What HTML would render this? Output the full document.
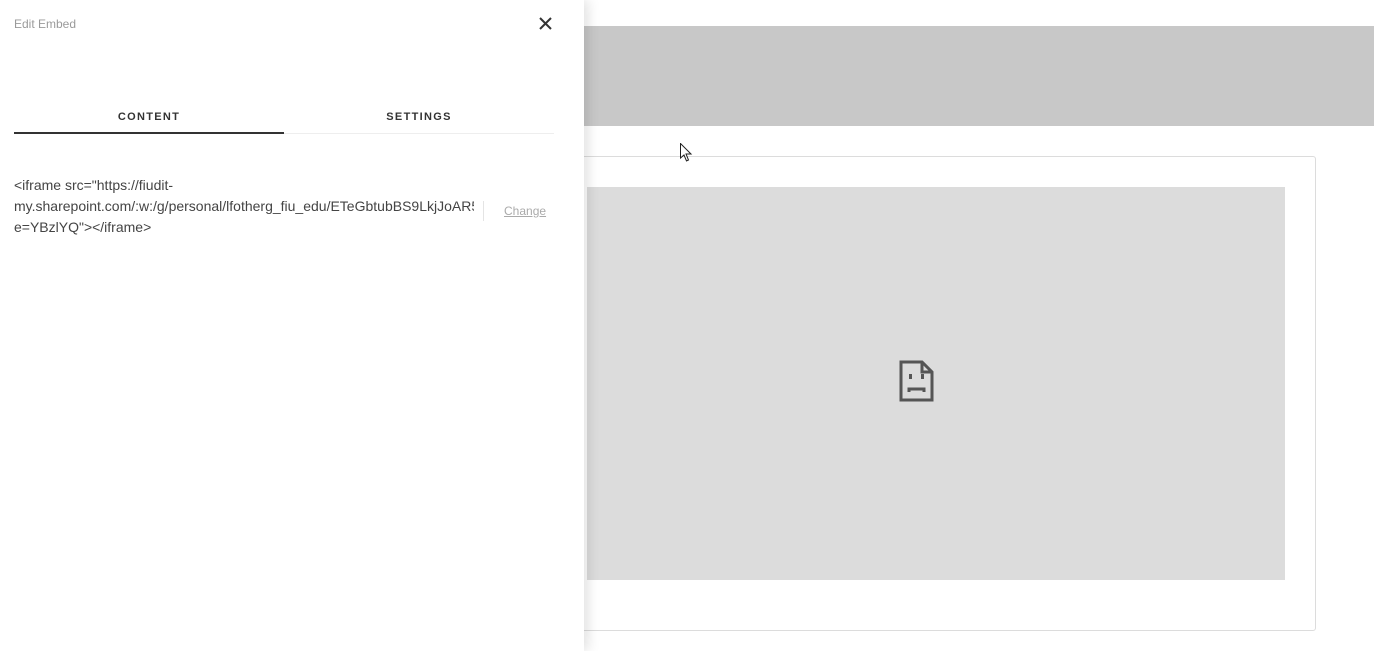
<!DOCTYPE html>
<html><head><style>
body{margin:0;width:1374px;height:651px;background:#fff;position:relative;overflow:hidden;font-family:"Liberation Sans",sans-serif}
.bar{position:absolute;left:584px;top:26px;width:790px;height:100px;background:#c8c8c8}
.card{position:absolute;left:540px;top:156px;width:774px;height:473px;border:1px solid #dcdcdc;border-radius:3px;background:#fff}
.inner{position:absolute;left:587px;top:187px;width:698px;height:393px;background:#dcdcdc}
.panel{position:absolute;left:0;top:0;width:584px;height:651px;background:#fff;box-shadow:4px 0 12px rgba(0,0,0,.12)}
.t{position:absolute;left:14px;top:17px;font-size:12px;color:#9a9a9a}
.x{position:absolute;left:537px;top:15px}
.tab{position:absolute;top:111px;width:270px;text-align:center;font-size:11px;font-weight:bold;letter-spacing:1.3px;color:#333}
.l1{position:absolute;left:14px;top:132px;width:270px;height:2px;background:#333}
.l2{position:absolute;left:284px;top:133px;width:270px;height:1px;background:#eee}
.code{position:absolute;left:14px;top:175px;width:460px;font-size:14px;line-height:21px;color:#444;white-space:nowrap;overflow:hidden}
.sep{position:absolute;left:483px;top:201px;width:1px;height:20px;background:#e4e4e4}
.ch{position:absolute;left:504px;top:204px;font-size:12px;color:#aaa;text-decoration:underline}
</style></head><body>
<div class="bar"></div>
<div class="card"></div>
<div class="inner"></div>
<svg style="position:absolute;left:899px;top:360px" width="36" height="42" viewBox="0 0 36 42"><path d="M2 2H23L33 12V40H2Z M23 2V12H33" fill="none" stroke="#555" stroke-width="3"/><rect x="10" y="14" width="3" height="5" fill="#555"/><rect x="22" y="14" width="3" height="5" fill="#555"/><path d="M10 32V29H25V32" fill="none" stroke="#555" stroke-width="3"/></svg>
<svg style="position:absolute;left:680px;top:143px" width="13" height="20" viewBox="0 0 13 20"><path d="M0.5 0.5V15L4 12L6.5 18L8.5 17L6 11H11Z" fill="#fff" stroke="#222" stroke-width="1"/></svg>
<div class="panel">
<div class="t">Edit Embed</div>
<svg class="x" width="17" height="17" viewBox="0 0 17 17"><path d="M3 3L14 14M14 3L3 14" stroke="#333" stroke-width="2"/></svg>
<div class="tab" style="left:14px">CONTENT</div>
<div class="tab" style="left:284px">SETTINGS</div>
<div class="l1"></div><div class="l2"></div>
<div class="code">&lt;iframe src="https://fiudit-<br>my.sharepoint.com/:w:/g/personal/lfotherg_fiu_edu/ETeGbtubBS9LkjJoAR5<br>e=YBzlYQ"&gt;&lt;/iframe&gt;</div>
<div class="sep"></div>
<div class="ch">Change</div>
</div>
</body></html>
